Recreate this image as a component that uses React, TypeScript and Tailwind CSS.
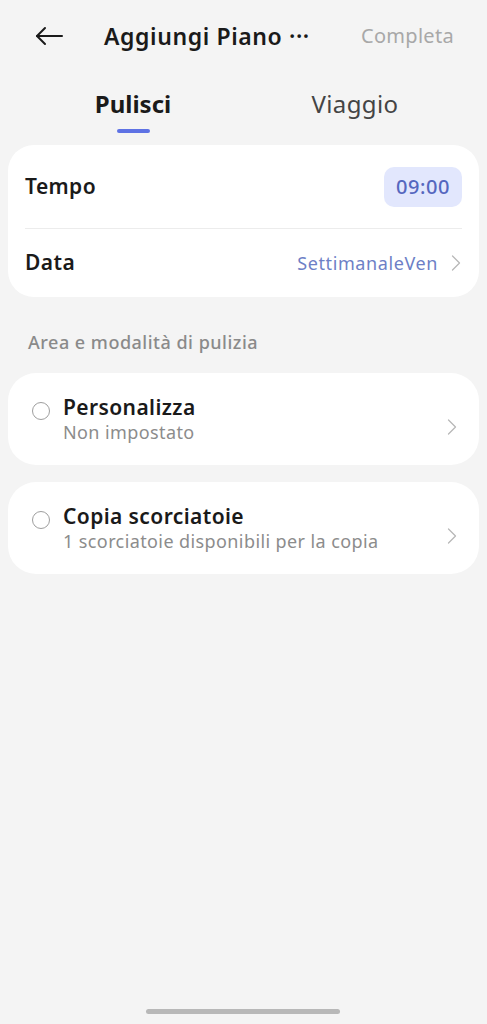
import { ChevronRight } from 'lucide-react';

const font = { fontFamily: '"Noto Sans", "Open Sans", sans-serif' };

const Chevron = ({ className = '' }: { className?: string }) => (
  <ChevronRight className={`w-[28px] h-[28px] text-[#b8b8b8] -mr-[8px] ${className}`} strokeWidth={1.1} />
);

export default function App() {
  return (
    <div className="w-[487px] h-[1024px] bg-[#f4f4f4] flex flex-col relative overflow-hidden" style={font}>
      {/* Header */}
      <div className="h-[72px] flex items-center pl-[35px] pr-[33px]">
        <svg width="28" height="20" viewBox="0 0 28 20" fill="none" stroke="#1a1a1a" strokeWidth="2" strokeLinecap="round" strokeLinejoin="round">
          <path d="M27 10H2" />
          <path d="M10 2L2 10L10 18" />
        </svg>
        <div className="ml-[41px] text-[23px] font-semibold text-[#1a1a1a] tracking-[0.6px]">
          Aggiungi Piano ···
        </div>
        <div className="ml-auto text-[20px] text-[#a8a8a8] tracking-[0.3px]">Completa</div>
      </div>

      {/* Tabs */}
      <div className="flex h-[73px]">
        <div className="w-[266px] flex flex-col items-center pt-[16px]">
          <div className="text-[24px] font-bold text-[#1a1a1a] leading-[32px]">Pulisci</div>
          <div className="w-[33px] h-[4px] rounded-full bg-[#5e72e4] mt-[9px]" />
        </div>
        <div className="w-[178px] flex flex-col items-center pt-[16px]">
          <div className="text-[24px] text-[#444] leading-[32px] tracking-[0.4px]">Viaggio</div>
        </div>
      </div>

      {/* Time / Date card */}
      <div className="mx-[8px] bg-white rounded-[26px] px-[17px] pt-[22px]">
        <div className="flex items-center justify-between">
          <div className="text-[21px] font-semibold text-[#1a1a1a] tracking-[0.4px]">Tempo</div>
          <div className="w-[78px] h-[40px] rounded-[10px] bg-[#e2e7fd] flex items-center justify-center text-[20px] font-medium text-[#5567bf] tracking-[0.6px]">
            09:00
          </div>
        </div>
        <div className="h-px bg-[#ececec] mt-[21px]" />
        <div className="flex items-center justify-between h-[68px]">
          <div className="text-[21px] font-semibold text-[#1a1a1a] tracking-[0.4px]">Data</div>
          <div className="flex items-center gap-[4px]">
            <span className="text-[18px] text-[#6d7fc6] tracking-[0.6px]">SettimanaleVen</span>
            <Chevron />
          </div>
        </div>
      </div>

      {/* Section label */}
      <div className="mt-[32px] pl-[28px] text-[18px] font-medium text-[#8a8a8a] tracking-[0.5px] leading-[26px]">
        Area e modalità di pulizia
      </div>

      {/* Options */}
      <div className="mt-[18px] flex flex-col gap-[17px] mx-[8px]">
        {[
          { title: 'Personalizza', sub: 'Non impostato' },
          { title: 'Copia scorciatoie', sub: '1 scorciatoie disponibili per la copia' },
        ].map((o) => (
          <div key={o.title} className="bg-white rounded-[28px] h-[92px] flex items-center pl-[24px] pr-[21px]">
            <div className="self-start mt-[29px] w-[18px] h-[18px] rounded-full border-[1.5px] border-[#9e9e9e]" />
            <div className="ml-[13px] flex-1 flex flex-col">
              <div className="text-[21px] font-semibold text-[#1a1a1a] leading-[26px] tracking-[0.4px]">{o.title}</div>
              <div className="text-[18px] text-[#8c8c8c] leading-[24px] tracking-[0.4px]">{o.sub}</div>
            </div>
            <Chevron className="mt-[16px]" />
          </div>
        ))}
      </div>

      {/* Home indicator */}
      <div className="absolute bottom-[10px] left-[146px] w-[194px] h-[5px] rounded-full bg-[#b8b8b8]" />
    </div>
  );
}
